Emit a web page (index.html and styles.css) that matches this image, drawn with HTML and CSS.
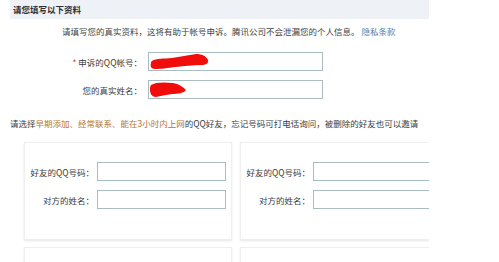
FILE: index.html
```html
<!DOCTYPE html>
<html lang="zh">
<head>
<meta charset="utf-8">
<link rel="stylesheet" href="styles.css">
</head>
<body>
<div class="page">
  <div class="head">请您填写以下资料</div>
  <p class="intro">请填写您的真实资料，这将有助于帐号申诉。腾讯公司不会泄漏您的个人信息。 <span class="link">隐私条款</span></p>
  <div class="form">
    <div class="row">
      <label class="label"><span class="star">*</span> 申诉的QQ帐号：</label>
      <div class="field">
        <svg class="scrawl" width="60" height="17" viewBox="0 0 60 17"><path d="M2 8 C6 5 14 6 22 5 C30 4 38 2 46 1 C52 1 56 3 58 7 C59 10 56 12 51 12 C43 12 34 13 26 14 C18 15 10 16 5 16 C1 16 0 13 1 10 C1 9 1 9 2 8 Z" fill="#f20d0d"/></svg>
      </div>
    </div>
    <div class="row">
      <label class="label">您的真实姓名：</label>
      <div class="field">
        <svg class="scrawl" width="38" height="17" viewBox="0 0 38 17"><path d="M1 4 C5 1 15 1 23 2 C29 3 33 6 36 9 C34 12 28 13 22 13 C16 14 10 15 6 16 C2 16 0 13 0 9 C0 7 0 5 1 4 Z" fill="#f20d0d"/></svg>
      </div>
    </div>
  </div>
  <p class="tip">请选择<span class="hl">早期添加、经常联系、能在3小时内上网</span>的QQ好友，忘记号码可打电话询问，被删除的好友也可以邀请</p>
  <div class="cards">
    <div class="card">
      <div class="crow"><span class="clabel">好友的QQ号码：</span><div class="cfield"></div></div>
      <div class="crow"><span class="clabel">对方的姓名：</span><div class="cfield"></div></div>
    </div>
    <div class="card">
      <div class="crow"><span class="clabel">好友的QQ号码：</span><div class="cfield"></div></div>
      <div class="crow"><span class="clabel">对方的姓名：</span><div class="cfield"></div></div>
    </div>
    <div class="card"></div>
    <div class="card"></div>
  </div>
</div>
</body>
</html>
```

FILE: styles.css
```css
html, body {
  margin: 0;
  padding: 0;
  background: #ffffff;
}
body {
  font-family: "Noto Sans CJK SC", "Noto Sans", sans-serif;
  font-size: 8.5px;
  color: #3c3c3c;
}
.page {
  width: 429px;
  height: 262px;
  overflow: hidden;
}
.head {
  margin-left: 10px;
  height: 19px;
  line-height: 19px;
  padding-left: 3px;
  background: #eef2f6;
  font-weight: bold;
  color: #2f2f2f;
}
.intro {
  margin: 6px 0 0 62px;
  height: 12px;
  line-height: 12px;
  white-space: nowrap;
  color: #444;
}
.link {
  color: #4f7fae;
}
.form {
  margin-top: 15px;
  display: flex;
  flex-direction: column;
  gap: 9px;
}
.row {
  display: flex;
  align-items: center;
  gap: 6px;
  height: 19px;
}
.label {
  width: 142px;
  text-align: right;
  color: #3c3c3c;
}
.star {
  color: #d33;
}
.field {
  box-sizing: border-box;
  width: 175px;
  height: 19px;
  border: 1px solid #a9bcc0;
  display: flex;
  align-items: center;
  background: #fff;
}
.scrawl {
  display: block;
  margin-left: 1px;
}
.tip {
  margin: 18px 0 0 10px;
  height: 12px;
  line-height: 12px;
  white-space: nowrap;
  color: #3c3c3c;
}
.hl {
  color: #b8752f;
}
.cards {
  margin: 13px 0 0 24px;
  display: grid;
  grid-template-columns: 208px 208px;
  column-gap: 8px;
  row-gap: 7px;
  width: 440px;
}
.card {
  box-sizing: border-box;
  height: 98px;
  border: 1px solid #efefef;
  box-shadow: 0 1px 2px rgba(0, 0, 0, 0.10);
  background: #fff;
  padding: 19px 0 0 3px;
  display: flex;
  flex-direction: column;
  gap: 9px;
}
.crow {
  display: flex;
  align-items: center;
  gap: 3px;
  height: 19px;
}
.clabel {
  width: 66px;
  text-align: right;
  white-space: nowrap;
  color: #3c3c3c;
}
.cfield {
  box-sizing: border-box;
  width: 129px;
  height: 19px;
  border: 1px solid #a9bcc0;
}
```
